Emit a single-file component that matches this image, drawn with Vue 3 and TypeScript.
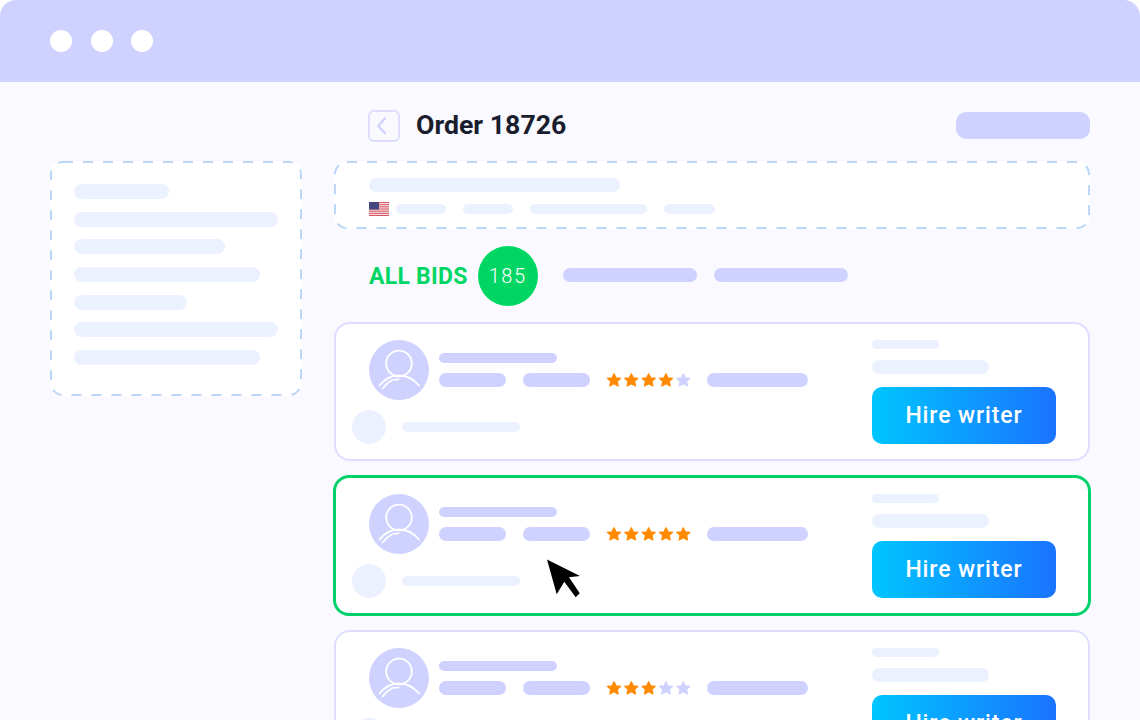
<script setup lang="ts">
interface Bid {
  id: number
  rating: number
  selected: boolean
}

const sidebarBars: number[] = [95, 204, 151, 186, 113, 204, 186]
const infoBars: number[] = [50, 50, 117, 51]
const bids: Bid[] = [
  { id: 1, rating: 4, selected: false },
  { id: 2, rating: 5, selected: true },
  { id: 3, rating: 3, selected: false },
]
const starCentres: number[] = [7, 24.33, 41.67, 59, 76.33]
const starPoints =
  '0,-6.600 2.100,-2.400 6.600,-2 3.300,1 4.200,5.700 0,3.400 -4.200,5.700 -3.300,1 -6.600,-2 -2.100,-2.400'
</script>

<template>
  <div class="window">
    <header class="titlebar">
      <span class="dot"></span>
      <span class="dot"></span>
      <span class="dot"></span>
    </header>

    <div class="content">
      <aside class="sidebar">
        <svg class="dash" width="252" height="235" viewBox="0 0 252 235" aria-hidden="true">
          <rect x="1" y="1" width="250" height="233" rx="12" class="dash-line" />
        </svg>
        <span
          v-for="(w, i) in sidebarBars"
          :key="i"
          class="bar light side-bar"
          :style="{ width: w + 'px' }"
        ></span>
      </aside>

      <main class="main">
        <div class="order-head">
          <div class="back">
            <svg width="28" height="28" viewBox="0 0 28 28" aria-hidden="true">
              <path d="M15 6.300 8.300 14l6.700 7.300" class="chevron" />
            </svg>
          </div>
          <h1 class="title">Order 18726</h1>
          <span class="head-pill"></span>
        </div>

        <section class="info">
          <svg class="dash" width="756" height="68" viewBox="0 0 756 68" aria-hidden="true">
            <rect x="1" y="1" width="754" height="66" rx="12" class="dash-line" />
          </svg>
          <span class="bar light info-title"></span>
          <div class="info-row">
            <svg class="flag" width="20" height="14" viewBox="0 0 20 14" aria-hidden="true">
              <rect width="20" height="14" fill="#f4f0f2" />
              <rect y="0" width="20" height="1.100" fill="#d9545f" />
              <rect y="2.150" width="20" height="1.100" fill="#d9545f" />
              <rect y="4.300" width="20" height="1.100" fill="#d9545f" />
              <rect y="6.450" width="20" height="1.100" fill="#d9545f" />
              <rect y="8.600" width="20" height="1.100" fill="#d9545f" />
              <rect y="10.750" width="20" height="1.100" fill="#d9545f" />
              <rect y="12.900" width="20" height="1.100" fill="#d9545f" />
              <rect width="10" height="7.500" fill="#45467f" />
            </svg>
            <span
              v-for="(w, i) in infoBars"
              :key="i"
              class="bar light info-bar"
              :style="{ width: w + 'px' }"
            ></span>
          </div>
        </section>

        <div class="tabs">
          <span class="tab-label">ALL BIDS</span>
          <span class="tab-count">185</span>
          <span class="bar mid tab-bar first"></span>
          <span class="bar mid tab-bar"></span>
        </div>

        <div class="bids">
          <article
            v-for="bid in bids"
            :key="bid.id"
            class="card"
            :class="{ selected: bid.selected }"
          >
            <div class="card-left">
              <div class="person">
                <div class="avatar">
                  <svg width="60" height="60" viewBox="0 0 60 60" aria-hidden="true">
                    <circle cx="30" cy="23.500" r="12.800" class="avatar-line" />
                    <path d="M10.500 45.500C16 38.500 23 35.500 30 35.500c7.500 0 14.500 3.500 20 10" class="avatar-line" />
                    <path d="M13.500 48.500c3-4 6-6.500 10-8.500M25.500 39.800l4-.5" class="avatar-line" />
                  </svg>
                </div>
                <div class="lines">
                  <span class="bar mid name"></span>
                  <div class="stats">
                    <span class="bar mid stat"></span>
                    <span class="bar mid stat"></span>
                    <svg class="stars" width="83" height="14" viewBox="0 0 83 14" aria-hidden="true">
                      <g v-for="(c, i) in starCentres" :key="i" :transform="`translate(${c} 7.300)`">
                        <polygon
                          :points="starPoints"
                          :class="i < bid.rating ? 'star-on' : 'star-off'"
                        />
                      </g>
                    </svg>
                    <span class="bar mid stat wide"></span>
                  </div>
                </div>
              </div>
              <div class="note">
                <span class="note-dot"></span>
                <span class="bar light note-bar"></span>
              </div>
            </div>

            <div class="card-right">
              <span class="bar light price-a"></span>
              <span class="bar light price-b"></span>
              <button class="hire" type="button">Hire writer</button>
            </div>

            <svg
              v-if="bid.selected"
              class="cursor"
              width="36"
              height="40"
              viewBox="0 0 36 40"
              aria-hidden="true"
            >
              <polygon points="1,0.500 34,17 23,18.300 33.700,34.300 29.700,38.300 18.300,22.700 10.700,35.300" fill="#000" />
            </svg>
          </article>
        </div>
      </main>
    </div>
  </div>
</template>

<style>
html,
body {
  margin: 0;
  background: #fff;
}
</style>

<style scoped>
.window {
  width: 1140px;
  height: 720px;
  overflow: hidden;
  background: #f9f9ff;
  border-radius: 16px 16px 0 0;
  font-family: Roboto, "Liberation Sans", sans-serif;
  display: flex;
  flex-direction: column;
}

.titlebar {
  height: 82px;
  flex: none;
  box-sizing: border-box;
  padding-left: 50px;
  background: #cfd2ff;
  display: flex;
  align-items: center;
  gap: 18.500px;
}

.dot {
  width: 22px;
  height: 22px;
  border-radius: 50%;
  background: #fff;
}

.content {
  display: flex;
  gap: 32px;
  padding-left: 50px;
  align-items: flex-start;
}

.dash {
  position: absolute;
  inset: 0;
}

.dash-line {
  fill: none;
  stroke: #bcd6f8;
  stroke-width: 2;
  stroke-dasharray: 10 10;
}

.bar {
  display: block;
  border-radius: 8px;
}

.light {
  background: #ebf1fe;
}

.mid {
  background: #cfd2ff;
}

.sidebar {
  position: relative;
  flex: none;
  width: 252px;
  height: 235px;
  margin-top: 79px;
  box-sizing: border-box;
  padding: 23px 24px 0;
  background: #fff;
  border-radius: 12px;
  display: flex;
  flex-direction: column;
  gap: 12.670px;
}

.side-bar {
  height: 15px;
}

.main {
  flex: none;
  width: 756px;
}

.order-head {
  height: 32px;
  margin-top: 28px;
  padding-left: 34px;
  display: flex;
  align-items: center;
}

.back {
  width: 32px;
  height: 32px;
  box-sizing: border-box;
  border: 2px solid #dcdefc;
  border-radius: 6px;
  display: flex;
}

.chevron {
  fill: none;
  stroke: #cfd2ff;
  stroke-width: 2.200;
  stroke-linecap: round;
  stroke-linejoin: round;
}

.title {
  margin: -2px 0 0 16px;
  font-size: 26.700px;
  line-height: 32px;
  font-weight: 700;
  color: #1a1d2e;
}

.head-pill {
  width: 134px;
  height: 27px;
  margin: -1px 0 0 auto;
  border-radius: 10px;
  background: #cfd2ff;
}

.info {
  position: relative;
  height: 68px;
  margin-top: 19px;
  box-sizing: border-box;
  padding: 17px 0 0 35px;
  background: #fff;
  border-radius: 12px;
}

.info-title {
  width: 251px;
  height: 14px;
}

.info-row {
  margin-top: 10px;
  display: flex;
  align-items: center;
  gap: 17px;
}

.flag {
  flex: none;
  margin-right: -10px;
}

.info-bar {
  height: 10px;
}

.tabs {
  height: 60px;
  margin-top: 17px;
  padding-left: 35px;
  display: flex;
  align-items: center;
}

.tab-label {
  font-size: 23px;
  letter-spacing: 0.250px;
  font-weight: 700;
  color: #00d664;
}

.tab-count {
  width: 60px;
  height: 60px;
  margin-left: 10px;
  border-radius: 50%;
  background: #00d664;
  color: #fff;
  font-size: 20px;
  font-weight: 300;
  letter-spacing: 1.500px;
  display: flex;
  align-items: center;
  justify-content: center;
}

.tab-bar {
  width: 134px;
  height: 14px;
  margin: -2px 0 0 17px;
}

.tab-bar.first {
  margin-left: 25px;
}

.bids {
  margin-top: 16px;
  display: flex;
  flex-direction: column;
  gap: 14px;
}

.card {
  position: relative;
  flex: none;
  height: 139px;
  box-sizing: border-box;
  padding: 16px 32px 0 16px;
  background: #fff;
  border: 2px solid #dddeff;
  border-radius: 16px;
  display: flex;
  justify-content: space-between;
}

.card.selected {
  height: 141px;
  margin: 0 -1px;
  border: 3px solid #00d26a;
}

.person {
  margin-left: 17px;
  display: flex;
}

.avatar {
  width: 60px;
  height: 60px;
  flex: none;
  border-radius: 50%;
  background: #cfd2ff;
}

.avatar svg {
  display: block;
}

.avatar-line {
  fill: none;
  stroke: #fff;
  stroke-width: 1.800;
  stroke-linecap: round;
}

.lines {
  margin: 13px 0 0 10px;
}

.name {
  width: 118px;
  height: 10px;
}

.stats {
  margin-top: 10px;
  display: flex;
  align-items: center;
  gap: 17px;
}

.stat {
  width: 67px;
  height: 14px;
}

.stat.wide {
  width: 101px;
}

.stars {
  overflow: visible;
}

.star-on {
  fill: #ff8a00;
  stroke: #ff8a00;
  stroke-width: 1.200;
  stroke-linejoin: round;
}

.star-off {
  fill: #cfd2ff;
  stroke: #cfd2ff;
  stroke-width: 1.200;
  stroke-linejoin: round;
}

.note {
  margin-top: 10px;
  display: flex;
  align-items: center;
  gap: 16px;
}

.note-dot {
  width: 34px;
  height: 34px;
  border-radius: 50%;
  background: #ebf1fe;
}

.note-bar {
  width: 118px;
  height: 10px;
}

.card-right {
  width: 184px;
  flex: none;
}

.price-a {
  width: 67px;
  height: 9px;
}

.price-b {
  width: 117px;
  height: 14px;
  margin-top: 11px;
}

.hire {
  display: block;
  width: 184px;
  height: 57px;
  margin-top: 12.500px;
  padding: 0;
  border: 0;
  border-radius: 10px;
  background: linear-gradient(90deg, #00c6ff, #1a73ff);
  color: #fff;
  font-family: inherit;
  font-size: 23px;
  font-weight: 500;
  letter-spacing: 0.900px;
}

.cursor {
  position: absolute;
  left: 210px;
  top: 81px;
}
</style>
